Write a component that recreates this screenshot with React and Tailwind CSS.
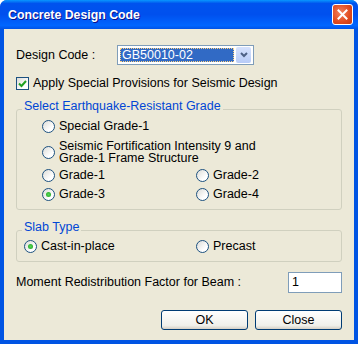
import React from 'react';

const Radio = ({ checked }) => (
    <span className="relative flex h-[13px] w-[13px] shrink-0 items-center justify-center rounded-full border border-[#1C5180] bg-[linear-gradient(135deg,#DCDCD7,#FFFFFF_70%)]">
        {checked && <span className="h-[5px] w-[5px] rounded-full bg-[radial-gradient(circle,#55D655,#21A121)]"></span>}
    </span>
);

const RadioRow = ({ checked, children, className = '' }) => (
    <label className={`flex h-[13px] items-center gap-[4px] ${className}`}>
        <Radio checked={checked} />
        <span>{children}</span>
    </label>
);

const Button = ({ children }) => (
    <button className="h-[20px] w-[87px] rounded-[3px] border border-[#003C74] bg-[linear-gradient(180deg,#FFFFFF,#F0F0EA_80%,#D6D0C5)] text-[12.5px] leading-none text-black">
        {children}
    </button>
);

export default function App() {
    return (
        <div className="flex h-[344px] w-[358px] flex-col overflow-hidden rounded-t-[7px] bg-[#0054E3] font-['Liberation_Sans',Arial,sans-serif] text-[12.5px] leading-[13px] text-black">
            {/* Title bar */}
            <div className="flex h-[29px] shrink-0 items-center justify-between bg-[linear-gradient(180deg,#0997FF,#0053EE_12%,#0050EE_50%,#0066FF_88%,#0053E6)] pl-[8px] pr-[5px]">
                <span className="text-[12.3px] font-bold leading-[16px] text-white [text-shadow:1px_1px_#0F1089]">Concrete Design Code</span>
                <button className="flex h-[21px] w-[21px] items-center justify-center rounded-[3px] border border-white bg-[radial-gradient(circle_at_40%_40%,#F2825F,#E04A1E_60%,#C13A13)]">
                    <svg width="11" height="11" viewBox="0 0 11 11">
                        <path d="M1.5 1.5 L9.5 9.5 M9.5 1.5 L1.5 9.5" stroke="white" strokeWidth="2" strokeLinecap="square" />
                    </svg>
                </button>
            </div>

            {/* Client area */}
            <div className="mx-[4px] mb-[4px] flex flex-1 flex-col bg-[#ECE9D8] px-[12px] pt-[16px]">
                <div className="flex h-[20px] items-center">
                    <span className="w-[101px]">Design Code :</span>
                    <div className="flex h-[20px] w-[137px] items-center border border-[#7F9DB9] bg-white p-[2px]">
                        <div className="flex h-full flex-1 items-center border border-dotted border-[#FFD280] bg-[#316AC5] pl-[1px] text-white">GB50010-02</div>
                        <div className="ml-[2px] flex h-[16px] w-[15px] items-center justify-center rounded-[2px] bg-[linear-gradient(180deg,#D6E2FD,#B7CBF7)]">
                            <svg width="8" height="6" viewBox="0 0 8 6">
                                <path d="M1 1 L4 4 L7 1" stroke="#4D6185" strokeWidth="2" fill="none" />
                            </svg>
                        </div>
                    </div>
                </div>

                <label className="mt-[12px] flex h-[13px] items-center gap-[4px]">
                    <span className="flex h-[13px] w-[13px] items-center justify-center border border-[#1C5180] bg-[linear-gradient(135deg,#DCDCD7,#FFFFFF_70%)]">
                        <svg width="9" height="8" viewBox="0 0 9 8">
                            <path d="M1 3.5 L3.5 6 L8 1" stroke="#21A121" strokeWidth="2" fill="none" />
                        </svg>
                    </span>
                    <span>Apply Special Provisions for Seismic Design</span>
                </label>

                <fieldset className="mt-[10px] rounded-[3px] border border-[#D0D0BF] px-[25px] pb-[8px] pt-[2px]">
                    <legend className="ml-[-20px] px-[2px] pb-[6px] leading-[12px] text-[#0046D5]">Select Earthquake-Resistant Grade</legend>
                    <RadioRow>Special Grade-1</RadioRow>
                    <label className="mt-[7px] flex items-center gap-[4px]">
                        <Radio />
                        <span className="leading-[12px]">Seismic Fortification Intensity 9 and<br />Grade-1 Frame Structure</span>
                    </label>
                    <div className="mt-[5px] grid grid-cols-[154px_1fr] gap-y-[6px]">
                        <RadioRow>Grade-1</RadioRow>
                        <RadioRow>Grade-2</RadioRow>
                        <RadioRow checked>Grade-3</RadioRow>
                        <RadioRow>Grade-4</RadioRow>
                    </div>
                </fieldset>

                <fieldset className="mt-[11px] rounded-[3px] border border-[#D0D0BF] px-[7px] pb-[8px] pt-[1px]">
                    <legend className="ml-[-2px] px-[2px] pb-[6px] leading-[12px] text-[#0046D5]">Slab Type</legend>
                    <div className="grid grid-cols-[172px_1fr]">
                        <RadioRow checked>Cast-in-place</RadioRow>
                        <RadioRow>Precast</RadioRow>
                    </div>
                </fieldset>

                <div className="mt-[10px] flex items-center justify-between">
                    <span>Moment Redistribution Factor for Beam :</span>
                    <div className="flex h-[21px] w-[54px] items-center border border-[#7F9DB9] bg-white pl-[3px]">1</div>
                </div>

                <div className="mt-[17px] flex justify-end gap-[7px]">
                    <Button>OK</Button>
                    <Button>Close</Button>
                </div>
            </div>
        </div>
    );
}
